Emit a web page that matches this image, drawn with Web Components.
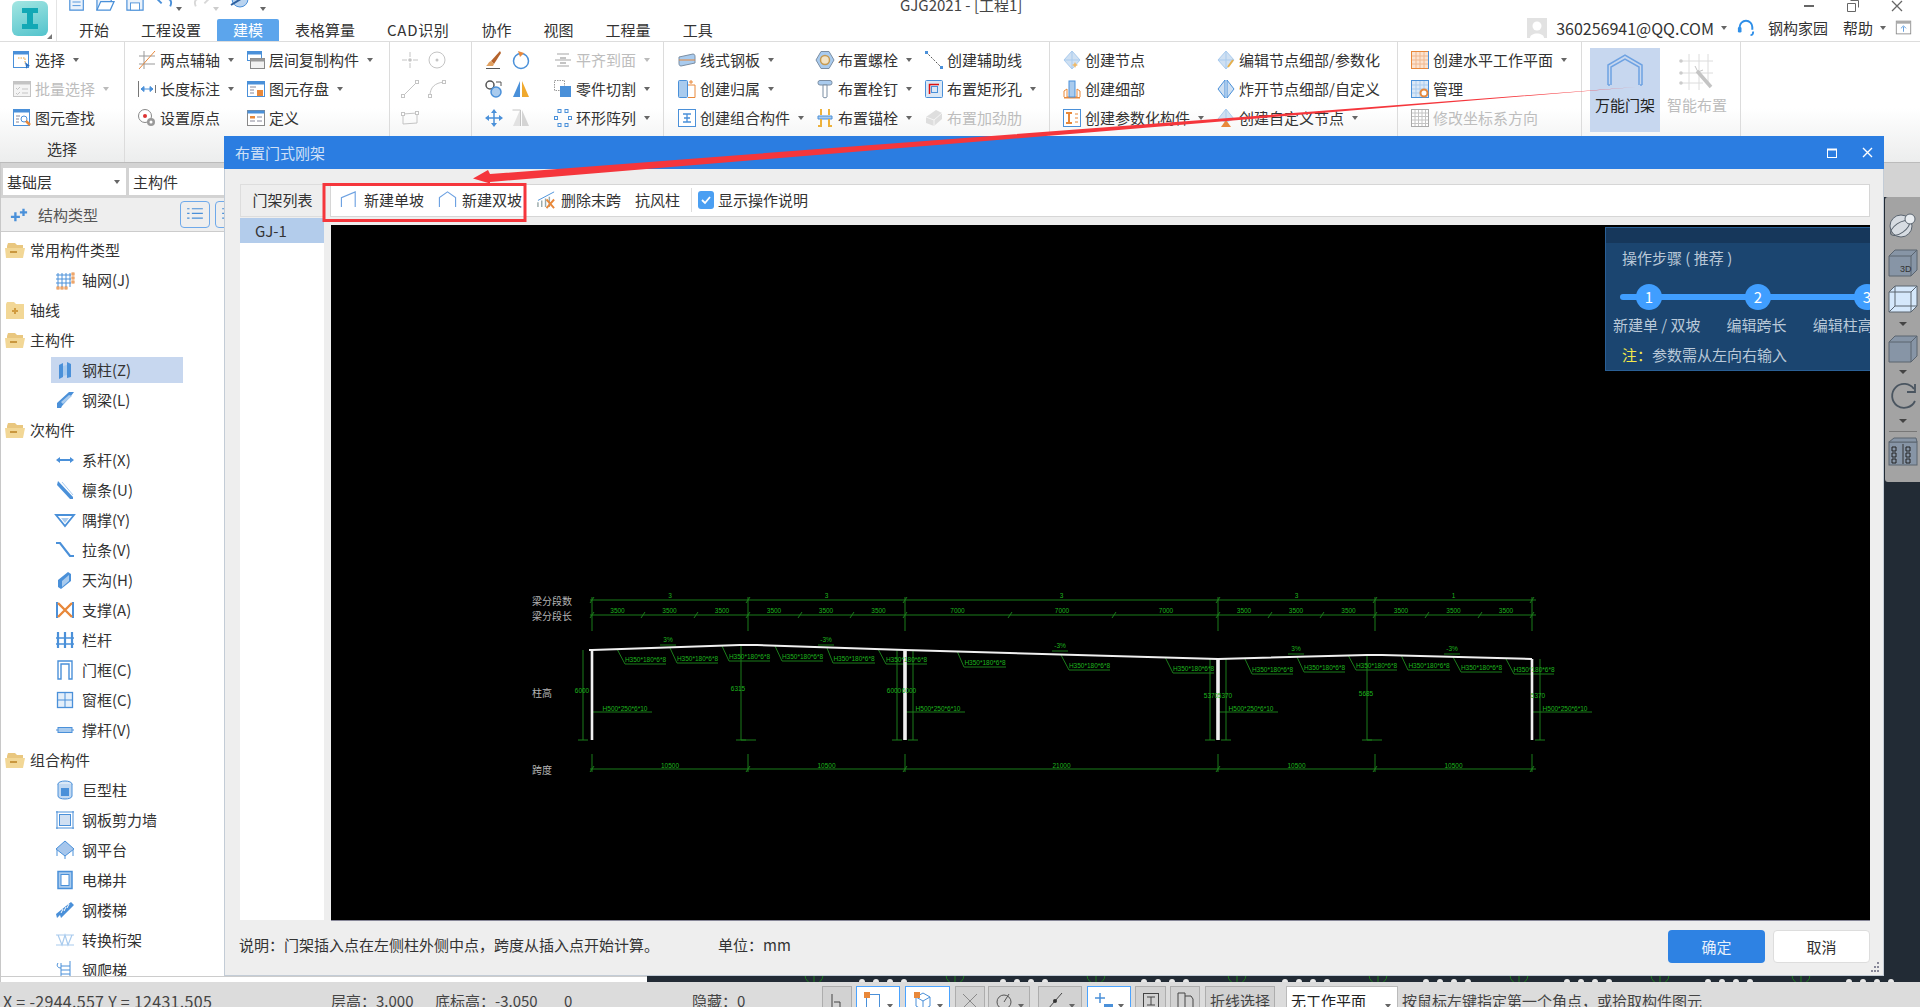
<!DOCTYPE html>
<html lang="zh">
<head>
<meta charset="utf-8">
<title>GJG2021</title>
<style>
    html, body { margin: 0; height: 100%; overflow: hidden; background: #fff; }
    body { font: 15px/20px "Noto Sans CJK SC", "Noto Sans", sans-serif; color: #333; }
</style>
</head>
<body>
<gjg-app></gjg-app>
<script>
/**
 * Icon drawings, 20x20 box unless the element says otherwise.
 * Rough copies of the GJG ribbon and tree icons.
 */
const B = '#4a90d9', L = '#a9cbee', O = '#e8883a', G = '#c4c4c4', D = '#5f6b7a';
const ICONS = {
    qDoc: `<path d="M2 0v19h15V6l-5-6z" fill="#eaf2fb" stroke="${B}" stroke-width="1.300"/><path d="M5 10h9M5 14h9" stroke="${B}"/>`,
    qOpen: `<path d="M1 18V4h7l2 2h6v3" fill="#eaf2fb" stroke="${B}" stroke-width="1.300"/><path d="M1 18l4-9h14l-4 9z" fill="#fff" stroke="${B}" stroke-width="1.300"/>`,
    qSave: `<path d="M1 0v19h18V0z" fill="#eaf2fb" stroke="${B}" stroke-width="1.300"/><rect x="5" y="11" width="10" height="8" fill="#fff" stroke="${B}"/>`,
    qUndo: `<path d="M2 6l5 5M2 6h10c5 0 6 4 4 8" fill="none" stroke="${B}" stroke-width="2"/>`,
    qRedo: `<path d="M18 6l-5 5M18 6H8c-5 0-6 4-4 8" fill="none" stroke="#d8d8d8" stroke-width="2"/>`,
    qGlobe: `<circle cx="10" cy="6" r="8" fill="#b9d3ef" stroke="${B}"/><path d="M1 12L19 1" stroke="#2d5f9e" stroke-width="2"/>`,
    select: `<rect x="1.500" y="1.500" width="15" height="16" fill="#fff" stroke="${B}"/><rect x="1.500" y="1.500" width="15" height="3" fill="${B}"/><path d="M6 8h7v6" fill="none" stroke="#e8a33a" stroke-dasharray="1.500 1"/><path d="M13 12l5 4-2.500 .5-1 2.500z" fill="#2b6fc0"/>`,
    batch: `<rect x="1.500" y="2.500" width="17" height="15" fill="#f4f4f4" stroke="${G}"/><rect x="1.500" y="2.500" width="17" height="3" fill="${G}"/><path d="M4 9l1.500 1.500L8 8M4 14l1.500 1.500L8 13M10 10h6M10 14h6" fill="none" stroke="${G}"/>`,
    find: `<rect x="1.500" y="1.500" width="16" height="16" fill="#fff" stroke="${B}"/><rect x="1.500" y="1.500" width="16" height="3" fill="${B}"/><path d="M4 8h4M4 11h3M4 14h3" stroke="#889"/><circle cx="12" cy="11" r="3" fill="#fff" stroke="${B}"/><path d="M14 13l4 4" stroke="${O}" stroke-width="2.500"/>`,
    axis2: `<path d="M2 6h16M2 14h16M7 1v18" stroke="#999" fill="none"/><path d="M2 19L18 1" stroke="${O}" fill="none"/>`,
    length: `<path d="M1.500 2v16M18.500 6v8" stroke="#777"/><path d="M4 10h12M4 10l3-2.500v5zM16 10l-3-2.500v5z" fill="${B}" stroke="${B}"/>`,
    origin: `<circle cx="8" cy="8" r="6.500" fill="#fff" stroke="#888"/><circle cx="8" cy="8" r="2" fill="#d33"/><circle cx="14" cy="14" r="4" fill="#999"/><circle cx="14" cy="14" r="1.500" fill="#fff"/>`,
    floorcopy: `<rect x="1.500" y="1.500" width="14" height="9" fill="#fff" stroke="${B}"/><rect x="1.500" y="1.500" width="14" height="3" fill="${B}"/><rect x="4.500" y="8.500" width="14" height="10" fill="#f2f2f2" stroke="#888"/><rect x="4.500" y="8.500" width="14" height="3" fill="#999"/>`,
    elsave: `<rect x="1.500" y="2.500" width="17" height="15" fill="#fff" stroke="${B}"/><rect x="1.500" y="2.500" width="17" height="3" fill="${B}"/><path d="M4 8h6M4 11h4M4 14h4" stroke="#889"/><rect x="11" y="11" width="6" height="6" fill="${O}"/>`,
    define: `<rect x="1.500" y="2.500" width="17" height="15" fill="#fff" stroke="#888"/><rect x="1.500" y="2.500" width="17" height="3" fill="${B}"/><rect x="4" y="8" width="5" height="2.500" fill="${O}"/><path d="M11 9h5M4 13h5M11 13h5" stroke="#889"/>`,
    point: `<path d="M10 2v5M10 13v5M2 10h5M13 10h5" stroke="${G}"/><circle cx="10" cy="10" r="1.800" fill="${G}"/>`,
    circlept: `<circle cx="10" cy="10" r="8" fill="none" stroke="${G}"/><circle cx="10" cy="10" r="1.500" fill="${G}"/>`,
    gline: `<path d="M3 17L17 3" stroke="${G}"/><rect x="1.500" y="15.500" width="3" height="3" fill="#fff" stroke="${G}"/><rect x="15.500" y="1.500" width="3" height="3" fill="#fff" stroke="${G}"/>`,
    garc: `<path d="M3 17C3 8 8 4 17 3" fill="none" stroke="${G}"/><rect x="1.500" y="15.500" width="3" height="3" fill="#fff" stroke="${G}"/><rect x="15.500" y="1.500" width="3" height="3" fill="#fff" stroke="${G}"/>`,
    grect: `<path d="M3 6l14-1v10l-14 1z" fill="none" stroke="${G}"/><rect x="1.500" y="4.500" width="3" height="3" fill="#fff" stroke="${G}"/><rect x="15.500" y="3.500" width="3" height="3" fill="#fff" stroke="${G}"/>`,
    brush: `<path d="M16 1L7 11l3 3 7-11z" fill="#b5632c"/><path d="M7 11c-3 1-3 4-5 5h7l1-2z" fill="#e0a060"/><path d="M2 18.500h14" stroke="#555"/>`,
    rotate: `<circle cx="10" cy="11" r="7.500" fill="none" stroke="${B}" stroke-width="1.500"/><path d="M7 1l6 2-4 4z" fill="${O}"/>`,
    offset: `<circle cx="6" cy="6" r="4" fill="#fff" stroke="#555" stroke-width="1.500"/><circle cx="12" cy="13" r="5" fill="${L}" stroke="${B}" stroke-width="1.500"/><path d="M12 3h5v4" fill="none" stroke="#555"/>`,
    mirror: `<path d="M9 2v16H2z" fill="${B}"/><path d="M11 2v16h7z" fill="#f0a92e"/>`,
    move: `<path d="M10 1l3 4h-6zM10 19l3-4h-6zM1 10l4-3v6zM19 10l-4-3v6z" fill="${B}"/><path d="M10 5v10M5 10h10" stroke="${B}" stroke-width="1.500"/>`,
    gmirror: `<path d="M9 2v16H2z" fill="#e2e2e2"/><path d="M11 2v16h7z" fill="#d4d4d4"/><path d="M1.500 2h8v16" fill="none" stroke="${G}"/>`,
    align: `<path d="M4 4h12M2 10h16M4 16h12" stroke="${G}" stroke-width="1.500"/><path d="M7 7h6v2H7zM7 12h6v2H7z" fill="${G}"/>`,
    cut: `<rect x="1.500" y="1.500" width="10" height="10" fill="none" stroke="#999" stroke-dasharray="1.500 1"/><rect x="7" y="7" width="11" height="11" fill="${B}"/>`,
    ring: `<g fill="none" stroke="${B}"><rect x="5" y="1.500" width="3" height="3"/><rect x="12" y="1.500" width="3" height="3"/><rect x="1.500" y="8.500" width="3" height="3"/><rect x="15.500" y="8.500" width="3" height="3"/><rect x="5" y="15.500" width="3" height="3"/><rect x="12" y="15.500" width="3" height="3"/></g>`,
    plate: `<path d="M2 7l14-3c2 0 2 2 2 3v6l-14 3c-2 0-2-2-2-3z" fill="${L}" stroke="#7b8ea3"/><path d="M2 10h16" stroke="${O}"/>`,
    belong: `<rect x="1.500" y="1.500" width="9" height="17" rx="1" fill="${L}" stroke="${B}"/><path d="M11 6h7v12.500h-7" fill="#fff" stroke="${O}"/><path d="M14 1v4M12 3h4" stroke="${O}"/>`,
    combo: `<rect x="1.500" y="1.500" width="17" height="17" fill="#fff" stroke="${B}"/><path d="M6 6h8M6 14h8M10 6v8M7 10h6" stroke="${B}" stroke-width="1.300"/>`,
    bolt: `<path d="M6 1.500h8l5 8.500-5 8.500H6L1 10z" fill="${L}" stroke="#7b8ea3"/><circle cx="10" cy="10" r="4.500" fill="#f3e3c4" stroke="#c59a52" stroke-width="1.500"/>`,
    stud: `<rect x="3" y="1.500" width="14" height="4.500" rx="2" fill="${L}" stroke="#7b8ea3"/><path d="M8 6h4v12c0 1-4 1-4 0z" fill="#fff" stroke="#7b8ea3"/>`,
    anchor: `<path d="M3 8h14v3H3z" fill="${L}" stroke="${B}"/><path d="M6 1v6M14 1v6M6 11v7h-3M14 11v7h3" fill="none" stroke="#edb23c" stroke-width="2"/>`,
    guide: `<path d="M2 2l16 16" stroke="#555" stroke-dasharray="2 1.500"/><rect x="1" y="1" width="3" height="3" fill="${B}"/><rect x="16" y="16" width="3" height="3" fill="${B}"/>`,
    hole: `<rect x="1.500" y="1.500" width="17" height="17" rx="1" fill="#dbe8f6" stroke="${B}"/><path d="M5.500 15V5.500H15" fill="none" stroke="#d11" stroke-width="1.500"/><rect x="7.500" y="7.500" width="6" height="6" fill="none" stroke="${B}"/>`,
    rib: `<path d="M2 9l10-7 6 3v6l-8 7-8-3z" fill="#dedede"/><path d="M2 9l8 3v6M10 12l8-7" fill="none" stroke="#f5f5f5"/>`,
    node: `<path d="M10 1l8 9-8 9-8-9z" fill="#cfe0f2" stroke="${L}"/><path d="M10 1v18M2 10h16" stroke="${L}"/><path d="M13 12l1 2 2 1-2 1-1 2-1-2-2-1 2-1z" fill="#eeb96a"/>`,
    detail: `<path d="M2 18.500h16" stroke="${O}" stroke-width="2"/><path d="M2 18V12l3-2v8M15 18v-8l3 2v6" fill="#fff" stroke="${O}"/><rect x="7" y="2" width="6" height="16" fill="${L}" stroke="${B}"/>`,
    param: `<rect x="1.500" y="1.500" width="17" height="17" fill="#fff" stroke="${B}"/><path d="M4 5h6M4 15h6M7 5v10" stroke="${O}" stroke-width="2"/><path d="M13 6h3M13 10h3M13 14h3" stroke="${O}"/>`,
    editnode: `<path d="M10 1l8 9-8 9-8-9z" fill="#cfe0f2" stroke="${L}"/><path d="M10 1v18M2 10h16" stroke="${L}"/><path d="M17 10l-5 7" stroke="#e8b04a" stroke-width="2"/>`,
    explode: `<path d="M9 1v18L2 10zM11 1v18l7-9z" fill="#cfe0f2" stroke="${B}"/>`,
    customnode: `<path d="M10 1l8 10-8 3-8-3z" fill="#cfe0f2" stroke="${L}"/><path d="M10 1v13" stroke="${L}"/><path d="M10 12l5 7H5z" fill="${O}"/>`,
    plane: `<rect x="1.500" y="1.500" width="17" height="17" fill="#fbe3d0" stroke="${O}"/><path d="M6 2v16M10 2v16M14 2v16M2 6h16M2 10h16M2 14h16" stroke="#f0b78e"/><path d="M18.500 1v18" stroke="${B}"/>`,
    manage: `<rect x="1.500" y="1.500" width="17" height="17" fill="#dbe8f6" stroke="${B}"/><path d="M6 2v16M10 2v16M14 2v16M2 6h16M2 10h16M2 14h16" stroke="${L}"/><circle cx="14" cy="14" r="3.500" fill="#fff" stroke="${O}" stroke-width="2"/>`,
    coord: `<rect x="1.500" y="1.500" width="17" height="17" fill="#fff" stroke="#aaa"/><path d="M5 2v16M8.500 2v16M12 2v16M15.500 2v16M2 5h16M2 8.500h16M2 12h16M2 15.500h16" stroke="${G}"/>`,
    portal: `<path d="M3 32V12L20 2l17 10v20M3 32h2M35 32h2" fill="none" stroke="#6ea2e2" stroke-width="1.500"/><path d="M6 32V14L20 6l14 8v18" fill="none" stroke="#6ea2e2" stroke-width="1.500"/>`,
    smart: `<path d="M4 8h32M4 20h32M4 30h22M12 1v36M22 1v36M31 1v28" stroke="#dcdcdc" fill="none"/><circle cx="4" cy="8" r="1.800" fill="#ccc"/><circle cx="4" cy="20" r="1.800" fill="#ccc"/><circle cx="4" cy="30" r="1.800" fill="#ccc"/><path d="M20 18l14 16" stroke="#c4c4c4" stroke-width="3.500"/><path d="M18 13l3 6 5-2" stroke="#c4c4c4" fill="none"/>`,
    fopen: `<path d="M2 6l1-3h7l2 2h6v3H2z" fill="#e9c77f"/><path d="M0 8h20l-2 10H1z" fill="#f2d796"/><rect x="5" y="11" width="7" height="2" fill="#c9973f"/>`,
    fclosed: `<path d="M1 4l1-2h7l2 2h8v15H1z" fill="#f2d796"/><path d="M10 8v6M7 11h6" stroke="#d19b3f" stroke-width="2"/>`,
    grid: `<path d="M3 3v14M7 3v14M11 3v14M15 3v14M1 5h15M1 9h15M1 13h15" stroke="${B}"/><g fill="#fff" stroke="${O}"><rect x="17" y="3" width="2" height="2"/><rect x="17" y="7" width="2" height="2"/><rect x="17" y="11" width="2" height="2"/><rect x="2" y="17" width="2" height="2"/><rect x="6" y="17" width="2" height="2"/><rect x="10" y="17" width="2" height="2"/></g>`,
    column: `<path d="M4 5l4-2v14l-4 2zM12 2l4 2v13l-4 1z" fill="${B}"/><path d="M8 6l4-1v10l-4 1z" fill="${L}"/>`,
    beam: `<path d="M2 13l12-11h5l-3 4L7 16l-1 2H2z" fill="${B}"/><path d="M6 12l8-7 3 1-9 8z" fill="${L}"/>`,
    tie: `<path d="M1 10l4-3v2h10V7l4 3-4 3v-2H5v2z" fill="${B}"/>`,
    purlin: `<path d="M3 1l15 16v2h-3L2 5z" fill="${B}"/><path d="M7 2l11 13" stroke="${L}"/>`,
    sbrace: `<path d="M1 5h18l-9 11z" fill="none" stroke="${B}" stroke-width="1.800"/><path d="M6 8h8l-4 5z" fill="${L}"/>`,
    rod: `<path d="M1 3h4l10 13h4" fill="none" stroke="${B}" stroke-width="2.200"/>`,
    gutter: `<path d="M3 10l10-8 3 2v7L6 19l-3-2z" fill="${B}"/><path d="M7 11l7-6v6l-7 6z" fill="${L}"/>`,
    cross: `<path d="M2 2v16M18 2v16" stroke="${B}" stroke-width="2"/><path d="M3 3l14 14M17 3L3 17" stroke="${O}" stroke-width="2.400"/>`,
    rail: `<path d="M3 2v16M10 2v16M17 2v16" stroke="${B}" stroke-width="2.200"/><path d="M1 8h18M1 14h18" stroke="${B}" stroke-width="1.500"/>`,
    door: `<path d="M3 19V1h14v18h-3V4H6v15z" fill="none" stroke="${B}" stroke-width="1.400"/>`,
    win: `<rect x="2.500" y="2.500" width="15" height="15" fill="#e4effa" stroke="${B}" stroke-width="1.300"/><path d="M10 3v14M3 10h14" stroke="${B}"/>`,
    strut: `<path d="M1 10h18" stroke="${B}"/><rect x="3" y="7.500" width="14" height="5" fill="${L}" stroke="${B}"/>`,
    mega: `<ellipse cx="10" cy="4" rx="7" ry="3" fill="#dbe8f6" stroke="${B}"/><path d="M3 4v12c0 4 14 4 14 0V4" fill="#c0d8f2" stroke="${B}"/><path d="M6 8h8v8H6z" fill="${B}"/>`,
    wall: `<path d="M2 1v18M18 1v18M1 2h18M1 18h18" stroke="${B}"/><rect x="4.500" y="4.500" width="11" height="11" fill="#cfdff2" stroke="${B}"/>`,
    platform: `<path d="M10 1l9 8-9 7-9-7z" fill="#a6c6ec" stroke="${B}"/><path d="M2 10v6M18 10v6M10 16v3" stroke="${B}"/>`,
    lift: `<rect x="3" y="1.500" width="14" height="17" fill="${L}" stroke="${B}" stroke-width="1.500"/><rect x="6" y="4.500" width="8" height="11" fill="#fff" stroke="${B}"/>`,
    stair: `<path d="M1 14L16 2l3 3L6 18l-1-3-3 3z" fill="${B}"/><path d="M6 13l2-4M9 11l2-4M12 8l2-4" stroke="#fff"/>`,
    truss: `<path d="M1 5h18M1 15h18M3 5l4 10 3-10 3 10 4-10" fill="none" stroke="${L}" stroke-width="1.200"/>`,
    ladder: `<path d="M6 3v16M15 1v18M6 6h9M6 10h9M6 14h9" stroke="${B}" fill="none"/><path d="M3 3c-2 3 0 5 3 5" stroke="${B}" fill="none"/>`,
    sparkle: `<path d="M6 7v10M1 12h10M15 3v8M11 7h8" stroke="${B}" stroke-width="2.600"/>`,
    slope1: `<path d="M1.500 18V8L16 2v16" fill="none" stroke="#6ea2e2" stroke-width="1.200"/>`,
    slope2: `<path d="M1.500 18V8L10 2l8.500 6v10" fill="none" stroke="#6ea2e2" stroke-width="1.200"/>`,
    delspan: `<path d="M1 18v-5M5 18v-7M9 18V9M13 18V7" stroke="#9aa" stroke-width="1.500"/><path d="M1 11L18 2" stroke="${B}"/><path d="M10 10l8 9M18 10l-8 9" stroke="${O}" stroke-width="2"/>`,
    sphere: `<circle cx="13" cy="15" r="11" fill="#d7dce2" stroke="#5a646f"/><ellipse cx="12" cy="17" rx="11" ry="5" transform="rotate(-35 12 17)" fill="none" stroke="#5a646f"/><circle cx="22" cy="8" r="5" fill="#e9edf1" stroke="#5a646f"/>`,
    cube3d: `<path d="M1 8l6-6h22v20l-6 6H1z" fill="#8795a6" stroke="#5a646f"/><path d="M1 8h22v20M23 8l6-6" fill="none" stroke="#5a646f"/>`,
    cubewire: `<path d="M1 8l6-6h22v20l-6 6H1z" fill="#d5e8fb" stroke="#5a646f"/><path d="M1 8h22v20M23 8l6-6M7 2v20H29M7 22l-6 6" fill="none" stroke="#5a646f"/>`,
    cubesolid: `<path d="M1 8l6-6h22v20l-6 6H1z" fill="#8795a6" stroke="#5a646f"/><path d="M1 8h22v20M23 8l6-6" fill="none" stroke="#5a646f"/>`,
    rotatecw: `<path d="M26 7A12 12 0 1 0 27 19" fill="none" stroke="#4a5560" stroke-width="1.800"/><path d="M27 2v8h-8" fill="none" stroke="#4a5560" stroke-width="1.800"/>`,
    checks: `<rect x="1" y="5" width="28" height="23" fill="#8795a6" stroke="#5a646f"/><path d="M6 1h22l1 4H1z" fill="#8795a6" stroke="#5a646f"/><path d="M15 7v20" stroke="#333"/><path d="M4 10h4v4H4zM4 16h4v4H4zM4 22h4v4H4zM18 10h4v4h-4zM18 16h4v4h-4zM18 22h4v4h-4z" fill="none" stroke="#222"/>`,
    sbL: `<path d="M5 3v14h8v-6H7" fill="none" stroke="#444"/>`,
    sbPin: `<rect x="3.500" y="3.500" width="13" height="15" fill="#fff" stroke="${B}"/><rect x="1" y="1" width="6" height="6" fill="${O}"/>`,
    sbCube: `<path d="M10 2l7 4v9l-7 4-7-4V6z" fill="#fff" stroke="${B}"/><path d="M3 6l7 4 7-4M10 10v9" fill="none" stroke="${B}"/><rect x="1" y="1" width="6" height="6" fill="${O}"/>`,
    sbX: `<path d="M3 3l14 14M17 3L3 17" stroke="#888"/>`,
    sbRot: `<circle cx="10" cy="11" r="7" fill="none" stroke="#555"/><path d="M10 11l5-8" stroke="#555"/>`,
    sbLine: `<path d="M3 18L17 2" stroke="#444"/><circle cx="10" cy="10" r="2" fill="#333"/>`,
    sbPlus: `<path d="M6 2v10M1 7h10" stroke="${B}" stroke-width="1.500"/><rect x="10" y="13" width="9" height="6" fill="${B}"/>`,
    sbI: `<rect x="2.500" y="2.500" width="15" height="15" fill="none" stroke="#444"/><path d="M6 6h8M6 14h8M10 6v8" stroke="#444"/>`,
    sbDoor: `<path d="M3 19V2h7v17M10 5h6l2 3v11" fill="none" stroke="#444"/>`,
    avatar: `<rect width="20" height="20" fill="#e2e2e2"/><circle cx="10" cy="8" r="4.500" fill="#fff"/><path d="M3 20c0-6 14-6 14 0z" fill="#fff"/>`,
    headset: `<path d="M3 12V9a7 7 0 0 1 14 0v3" fill="none" stroke="#2f8fe8" stroke-width="2.200"/><rect x="1" y="9" width="4" height="6" rx="1.500" fill="#2f8fe8"/><path d="M15 18c2 0 3-1 3-4" fill="none" stroke="#2f8fe8" stroke-width="2"/>`,
    upload: `<rect x="1.500" y="2.500" width="17" height="15" fill="#fff" stroke="#888"/><rect x="1.500" y="2.500" width="17" height="3" fill="#aaa"/><path d="M10 15V9M7 11l3-3 3 3" fill="none" stroke="${B}"/>`,
    listbtn: `<path d="M4 6h3M4 12h3M4 18h3M10 6h14M10 12h14M10 18h14" stroke="${B}" stroke-width="1.500"/>`
};

/**
 * <gjg-icon name size box> one inline SVG out of the table above.
 * box is the drawing's own coordinate size, 20 by default.
 */
class GjgIcon extends HTMLElement {
    connectedCallback() {
        const size = this.getAttribute('size') || 20;
        const box = this.getAttribute('box') || 20;
        const root = this.attachShadow({ mode: 'open' });
        root.innerHTML = `
            <style>
                :host { display: inline-flex; flex: none; width: ${size}px; height: ${size}px; }
                svg { display: block; overflow: visible; }
            </style>
            <svg width="${size}" height="${size}" viewBox="0 0 ${box} ${box}">${ICONS[this.getAttribute('name')] || ''}</svg>`;
    }
}

/**
 * <gjg-rb-item icon caret disabled> small ribbon command with icon and label.
 */
class GjgRibbonItem extends HTMLElement {
    connectedCallback() {
        const caret = this.hasAttribute('caret') ? '<i></i>' : '';
        const icon = this.getAttribute('icon');
        const root = this.attachShadow({ mode: 'open' });
        root.innerHTML = `
            <style>
                :host { display: flex; align-items: center; height: 29px; white-space: nowrap; color: #333; }
                :host([disabled]) { color: #bdbdbd; }
                gjg-icon { margin-right: 3px; }
                i { width: 0; height: 0; margin-left: 8px; border: 3.5px solid transparent; border-top: 4px solid #666; border-bottom: 0; }
                :host([disabled]) i { border-top-color: #bbb; }
            </style>
            ${icon ? `<gjg-icon name="${icon}"></gjg-icon>` : ''}<slot></slot>${caret}`;
    }
}

/**
 * <gjg-rb-big icon> large ribbon button with the label under the icon.
 */
class GjgRibbonBig extends HTMLElement {
    connectedCallback() {
        const root = this.attachShadow({ mode: 'open' });
        root.innerHTML = `
            <style>
                :host { display: flex; flex-direction: column; align-items: center; width: 70px; height: 84px; padding-top: 5px; box-sizing: border-box; }
                :host([active]) { background: #c7d7ef; color: #222; }
                :host([disabled]) { color: #bdbdbd; }
                slot { display: block; margin-top: 2px; }
            </style>
            <gjg-icon name="${this.getAttribute('icon')}" size="40" box="40"></gjg-icon><slot></slot>`;
    }
}

/**
 * <gjg-tree-row icon child active> one row of the component tree.
 */
class GjgTreeRow extends HTMLElement {
    connectedCallback() {
        const root = this.attachShadow({ mode: 'open' });
        root.innerHTML = `
            <style>
                :host { display: flex; align-items: center; height: 30px; padding-left: 4px; white-space: nowrap; }
                :host([child]) { padding-left: 50px; }
                .row { display: flex; align-items: center; gap: 5px; height: 26px; }
                :host([child]) .row { gap: 7px; padding-left: 4px; width: 128px; }
                :host([active]) .row { background: #c7d7ef; }
            </style>
            <div class="row"><gjg-icon name="${this.getAttribute('icon')}"></gjg-icon><span><slot></slot></span></div>`;
    }
}

/**
 * <gjg-tool icon> toolbar button in the dialog.
 */
class GjgTool extends HTMLElement {
    connectedCallback() {
        const icon = this.getAttribute('icon');
        const root = this.attachShadow({ mode: 'open' });
        root.innerHTML = `
            <style>
                :host { display: flex; align-items: center; gap: 5px; white-space: nowrap; height: 29px; }
            </style>
            ${icon ? `<gjg-icon name="${icon}" size="19"></gjg-icon>` : ''}<slot></slot>`;
    }
}

/**
 * <gjg-dialog heading> the floating window, content goes in the slot.
 */
class GjgDialog extends HTMLElement {
    connectedCallback() {
        const root = this.attachShadow({ mode: 'open' });
        root.innerHTML = `
            <style>
                :host { position: absolute; left: 224px; top: 136px; width: 1660px; height: 840px; box-sizing: border-box; display: flex; flex-direction: column; background: #eee; border: 1px solid #c3ccd6; border-top: 0; }
                header { flex: none; display: flex; align-items: center; height: 33px; margin: 0 -1px; padding-left: 11px; background: #2b7de1; color: #cfe0f6; }
                header span { flex: 1; }
                header svg { display: block; margin-right: 11px; }
                header svg + svg { margin: 0 11px 0 14px; }
                .body { flex: 1; min-height: 0; padding: 15px 13px 0 15px; }
                .grip { position: absolute; right: 3px; bottom: 3px; }
            </style>
            <header><span>${this.getAttribute('heading')}</span>
                <svg width="10" height="10"><rect x=".5" y="1.500" width="9" height="8" fill="none" stroke="#fff"/><path d="M0 1.500h10" stroke="#fff" stroke-width="2"/></svg>
                <svg width="11" height="11"><path d="M1 1l9 9M10 1l-9 9" stroke="#fff" stroke-width="1.400"/></svg>
            </header>
            <div class="body"><slot></slot></div>
            <svg class="grip" width="10" height="10" fill="#889"><rect x="7" y="0" width="2" height="2"/><rect x="4" y="4" width="2" height="2"/><rect x="7" y="4" width="2" height="2"/><rect x="1" y="8" width="2" height="2"/><rect x="4" y="8" width="2" height="2"/><rect x="7" y="8" width="2" height="2"/></svg>`;
    }
}

/**
 * <gjg-frame-canvas> black canvas with the portal frame elevation.
 * Numbers are page coordinates, the viewBox shifts them into the canvas.
 */
class GjgFrameCanvas extends HTMLElement {
    connectedCallback() {
        const root = this.attachShadow({ mode: 'open' });
        const line = (x1, y1, x2, y2) => `<path d="M${x1} ${y1}L${x2} ${y2}"/>`;
        const num = (x, y, s) => `<text class="num" x="${x}" y="${y}">${s}</text>`;
        const label = (x, y, s) => `<text class="lab" x="${x}" y="${y}">${s}</text>`;
        const tick = (x, y) => `<path d="M${x - 2} ${y + 3}L${x + 2} ${y - 3}"/>`;

        const spans = [592, 748, 905, 1218, 1375, 1532];
        const ticks = [592, 643, 696, 748, 800, 852, 905, 1010, 1114, 1218, 1270, 1322, 1375, 1427, 1480, 1532];
        let lines = '';
        let texts = '';

        // dimension rows on top and at the bottom
        lines += line(590, 600, 1536, 600) + line(590, 615, 1536, 615) + line(590, 769, 1536, 769);
        spans.forEach(x => {
            lines += line(x, 597, x, 631) + line(x, 754, x, 772) + tick(x, 600) + tick(x, 769);
        });
        ticks.forEach(x => { lines += tick(x, 615); });
        for (let i = 0; i < ticks.length - 1; i++) {
            const long = ticks[i + 1] - ticks[i] > 90;
            texts += num((ticks[i] + ticks[i + 1]) / 2, 613, long ? '7000' : '3500');
        }
        for (let i = 0; i < spans.length - 1; i++) {
            const mid = (spans[i] + spans[i + 1]) / 2;
            texts += num(mid, 598, i === 4 ? '1' : '3');
            texts += num(mid, 768, i === 2 ? '21000' : '10500');
        }

        // height dimensions
        [[583, 650], [741, 645], [897, 650], [913, 650], [1210, 659], [1226, 659], [1367, 655], [1540, 659]].forEach(([x, top]) => {
            lines += line(x, top, x, 740) + line(x - 5, 740, x + 5, 740);
        });
        lines += line(741, 740, 756, 740) + line(1367, 740, 1382, 740);
        texts += num(582, 693, '6000') + num(738, 691, '6315') + num(894, 693, '6000') + num(909, 693, '6000');
        texts += num(1211, 698, '5370') + num(1225, 698, '5370') + num(1366, 696, '5685') + num(1538, 698, '5370');

        // section callouts on the rafters
        [[617, 649, 625, 664, 666], [670, 648, 677, 663, 718], [722, 646, 729, 661, 770], [775, 646, 782, 661, 823],
            [827, 648, 833, 663, 875], [878, 649, 886, 664, 927], [957, 651, 964, 667, 1006], [1061, 655, 1069, 670, 1110],
            [1165, 657, 1173, 673, 1214], [1245, 659, 1252, 674, 1293], [1297, 657, 1304, 672, 1345], [1348, 655, 1356, 670, 1397],
            [1401, 655, 1408, 670, 1450], [1453, 657, 1461, 672, 1502], [1506, 659, 1514, 674, 1554]].forEach(([x1, y1, x2, y2, x3]) => {
            lines += `<path d="M${x1} ${y1}L${x2} ${y2}H${x3}"/>`;
            texts += num((x2 + x3) / 2, y2 - 2, 'H350*180*6*8');
        });

        // section callouts on the columns
        [592, 905, 1218, 1532].forEach(x => {
            lines += line(x, 712, x + 60, 712);
            texts += num(x + 33, 711, 'H500*250*6*10');
        });

        // slope marks
        [[668, 645, '3%'], [826, 645, '-3%'], [1060, 651, '-3%'], [1296, 654, '3%'], [1452, 654, '-3%']].forEach(([x, y, s]) => {
            lines += line(x - 8, y, x + 8, y);
            texts += num(x, y - 3, s);
        });

        root.innerHTML = `
            <style>
                :host { display: block; position: relative; height: 695px; background: #000; overflow: hidden; }
                svg { display: block; }
                .dim { fill: none; stroke: #1b7d1b; stroke-width: 1; }
                .frame { fill: none; stroke: #f0f0f0; }
                .num { font: 6.500px "Liberation Sans", sans-serif; fill: #1db41d; text-anchor: middle; }
                .lab { font: 10px "Noto Sans CJK SC", sans-serif; fill: #b5b5b5; }
            </style>
            <svg width="1539" height="695" viewBox="331 225 1539 695">
                <g class="dim">${lines}</g>
                <path class="frame" stroke-width="2" d="M589 650L592 650L740 645L757 645L905 650L1218 659L1367 655L1382 655L1532 659"/>
                <path class="frame" stroke-width="2.600" d="M592 650V740M1532 659V740"/>
                <path class="frame" stroke-width="3.600" d="M905 650V740M1218 659V740"/>
                ${texts}
                ${label(532, 605, '梁分段数')}${label(532, 620, '梁分段长')}${label(532, 697, '柱高')}${label(532, 774, '跨度')}
            </svg>
            <slot></slot>`;
    }
}

/**
 * <gjg-steps> the floating "how to use" panel over the canvas.
 */
class GjgSteps extends HTMLElement {
    connectedCallback() {
        const root = this.attachShadow({ mode: 'open' });
        root.innerHTML = `
            <style>
                :host { position: absolute; top: 2px; right: 0; width: 265px; height: 144px; box-sizing: border-box; overflow: hidden; background: #1b4570; border: 1px solid #2a5f95; border-right: 0; color: #b9c8d8; white-space: nowrap; }
                .strip { height: 15px; background: #16375b; }
                .title { height: 31px; padding-left: 16px; line-height: 30px; }
                .rail { position: relative; display: flex; gap: 83px; height: 26px; margin-top: 10px; padding-left: 30px; }
                .line { position: absolute; left: 14px; right: 0; top: 10px; height: 6px; border-radius: 3px 0 0 3px; background: #409eff; }
                .dot { position: relative; flex: none; width: 26px; height: 26px; border-radius: 50%; background: #409eff; color: #fff; text-align: center; line-height: 26px; }
                .names { display: flex; gap: 26px; margin-top: 3px; padding-left: 7px; height: 24px; line-height: 24px; }
                .note { margin-top: 8px; padding-left: 16px; line-height: 20px; }
                .note b { font-weight: 400; color: #f3e84a; }
            </style>
            <div class="strip"></div>
            <div class="title">操作步骤 ( 推荐 )</div>
            <div class="rail"><div class="line"></div><div class="dot">1</div><div class="dot">2</div><div class="dot">3</div></div>
            <div class="names"><span>新建单 / 双坡</span><span>编辑跨长</span><span>编辑柱高</span></div>
            <div class="note"><b>注：</b>参数需从左向右输入</div>`;
    }
}

/**
 * <gjg-workspace> what shows of the dark modelling view behind the dialog.
 */
class GjgWorkspace extends HTMLElement {
    connectedCallback() {
        const root = this.attachShadow({ mode: 'open' });
        let marks = '';
        for (let x = 26; x < 1273; x += 141) {
            marks += `<path d="M${x + 132} 0a9 9 0 0 0 18 0M${x + 141} 0v8" fill="none" stroke="#1c7a1c"/>`;
            for (let i = 0; i < 4; i++) marks += `<circle cx="${x + 189 + i * 14}" cy="7" r="3" fill="#e8e8e8"/>`;
        }
        root.innerHTML = `
            <style>
                :host { display: flex; flex-direction: column; flex: 1; min-width: 0; background: #222b35; }
                .band { height: 34px; background: #d3d3d3; }
                .side { display: flex; flex-direction: column; align-items: center; align-self: flex-end; width: 35px; height: 285px; padding-top: 14px; box-sizing: border-box; background: #a3a3a3; border-radius: 3px 0 0 3px; }
                .side i { flex: none; width: 0; height: 0; border: 4px solid transparent; border-top: 4px solid #444; border-bottom: 0; }
                .side hr { flex: none; width: 28px; margin: 8px 0 5px; border: 0; border-top: 1px solid #777; }
                .tag { position: relative; height: 0; width: 30px; font: 9px/10px "Liberation Sans", sans-serif; color: #333; text-align: right; top: -14px; right: 6px; }
                svg.strip { display: block; margin-top: auto; }
            </style>
            <div class="band"></div>
            <div class="side">
                <gjg-icon name="sphere" size="30" box="30"></gjg-icon>
                <gjg-icon name="cube3d" size="30" box="30" style="margin-top:7px"></gjg-icon><div class="tag">3D</div>
                <gjg-icon name="cubewire" size="30" box="30" style="margin-top:6px"></gjg-icon><i style="margin:8px 0"></i>
                <gjg-icon name="cubesolid" size="30" box="30"></gjg-icon><i style="margin:6px 0 8px"></i>
                <gjg-icon name="rotatecw" size="30" box="30"></gjg-icon><i style="margin-top:7px"></i><hr>
                <gjg-icon name="checks" size="30" box="30"></gjg-icon>
            </div>
            <svg class="strip" width="1273" height="7">${marks}</svg>`;
    }
}

/**
 * <gjg-app> the whole window: title bar, ribbon, panels, status bar, dialog.
 */
class GjgApp extends HTMLElement {
    connectedCallback() {
        const root = this.attachShadow({ mode: 'open' });
        root.innerHTML = `
            <style>
                :host { display: flex; flex-direction: column; position: relative; width: 1920px; height: 1007px; overflow: hidden; }

                /* title bar */
                .top { flex: none; display: flex; height: 42px; border-bottom: 1px solid #ddd; box-sizing: border-box; }
                .logo { flex: none; position: relative; width: 57px; border-right: 1px solid #e4e4e4; box-sizing: border-box; padding: 1px 0 0 12px; }
                .logo b { display: flex; width: 36px; height: 35px; border-radius: 6px; background: linear-gradient(160deg, #a4e6e2, #52c3cc); }
                .logo u { position: absolute; left: 47px; top: 34px; width: 0; height: 0; border-left: 5px solid transparent; border-bottom: 5px solid #777; }
                .top-main { flex: 1; min-width: 0; }
                .row1 { display: flex; height: 14px; overflow: hidden; }
                .quick { display: flex; align-items: flex-start; width: 843px; padding-left: 11px; box-sizing: border-box; margin-top: -7px; }
                .title { line-height: 14px; margin-top: -2px; color: #444; white-space: nowrap; }
                .winbtns { display: flex; gap: 32px; margin-left: auto; padding: 0 17px 0 0; }
                .winbtns svg { display: block; }
                .row2 { display: flex; align-items: flex-end; height: 27px; padding-left: 6px; }
                .tab { height: 22px; line-height: 22px; padding: 0 16px; white-space: nowrap; }
                .tab.on { background: #5ca5ec; color: #fff; border-radius: 2px 2px 0 0; }
                .acct { display: flex; align-items: center; margin-left: auto; height: 27px; white-space: nowrap; padding-right: 8px; }
                .caret { width: 0; height: 0; border: 3.5px solid transparent; border-top: 4px solid #666; border-bottom: 0; }

                /* ribbon */
                .ribbon { flex: none; display: flex; height: 121px; background: linear-gradient(#fff 55%, #eceded); border-bottom: 1px solid #bbb; box-sizing: border-box; }
                .group { flex: none; display: flex; box-sizing: border-box; padding: 3px 0 0 12px; border-right: 1px solid #dcdcdc; position: relative; }
                .col { display: flex; flex-direction: column; }
                .pair { display: flex; align-items: center; gap: 7px; height: 29px; }
                .group-label { position: absolute; left: 0; right: 0; bottom: 3px; text-align: center; }

                /* panels */
                .main { flex: 1; min-height: 0; display: flex; }
                .left { flex: none; display: flex; flex-direction: column; width: 647px; box-sizing: border-box; border-left: 1px solid #c8c8c8; background: #fff; }
                .combos { flex: none; display: flex; gap: 3px; height: 35px; padding: 5px 0 3px 2px; box-sizing: border-box; background: #d3d3d3; }
                .combo { display: flex; align-items: center; justify-content: space-between; height: 27px; padding: 0 6px 0 4px; background: #fff; box-sizing: border-box; }
                .tree-head { flex: none; display: flex; align-items: center; height: 34px; padding-left: 9px; background: #eee; border-bottom: 1px solid #ccc; box-sizing: border-box; color: #555; }
                .tree-head .sq { display: flex; align-items: center; justify-content: center; width: 30px; height: 27px; margin-right: 5px; border: 1px solid #6ea9ea; border-radius: 4px; box-sizing: border-box; }
                .tree { flex: 1; min-height: 0; padding-top: 3px; }
                .tree-foot { flex: none; height: 5px; border-top: 1px solid #ccc; background: #fff; }

                /* dialog content */
                .dlg-grid { display: grid; grid-template-columns: 84px 1539px; column-gap: 7px; grid-template-rows: 33px 703px; }
                .tab-list { display: flex; align-items: center; justify-content: center; padding-bottom: 2px; border: 1px solid #ddd; border-right: 0; box-sizing: border-box; color: #333; }
                .tools { display: flex; align-items: center; gap: 14px; padding: 0 0 2px 9px; background: #fff; border: 1px solid #d6d6d6; box-sizing: border-box; white-space: nowrap; margin-left: -1px; }
                .tools .sep { width: 1px; height: 24px; background: #ddd; margin: 0 -7px 0 -3px; }
                .check { display: flex; align-items: center; gap: 4px; margin-left: -1px; }
                .check b { display: flex; align-items: center; justify-content: center; width: 16px; height: 18px; border-radius: 3px; background: #4b9ff2; }
                .list { margin-top: 1px; background: #fff; }
                .list div { height: 25px; line-height: 25px; padding-left: 15px; background: #b3cceb; }
                gjg-frame-canvas { margin-top: 8px; border-bottom: 1px solid #889; }
                .foot { display: flex; align-items: center; height: 55px; white-space: nowrap; }
                .foot .note { flex: 1; margin: -6px 0 0 -1px; }
                .foot .unit { margin-left: 59px; }
                .btn { width: 97px; height: 33px; line-height: 33px; text-align: center; border-radius: 4px; box-sizing: border-box; margin-left: 8px; margin-top: -3px; }
                .btn.ok { background: #2e82e3; color: #e6f0fb; }
                .btn.no { background: #fff; border: 1px solid #ddd; line-height: 31px; }

                /* status bar */
                .status { flex: none; display: flex; align-items: flex-start; height: 25px; overflow: hidden; padding-top: 4px; box-sizing: border-box; background: #dcdcdc; white-space: nowrap; }
                .status span { line-height: 30px; flex: none; color: #444; }
                .sb { flex: none; display: flex; align-items: center; justify-content: center; gap: 4px; height: 30px; box-sizing: border-box; border: 1px solid #adadad; background: #d2d2d2; }
                .sb.on { border-color: #4aa3ff; background: #fff; }
                .sb .caret { margin-top: 10px; }

                /* red annotation over everything */
                .marks { position: absolute; left: 0; top: 0; pointer-events: none; }
            </style>

            <div class="top">
                <div class="logo"><b><svg width="36" height="35"><path d="M10 7h16v5h-5v11h5v5H10v-5h5V12h-5z" fill="#12a8b5"/></svg></b><u></u></div>
                <div class="top-main">
                    <div class="row1">
                        <div class="quick">
                            <gjg-icon name="qDoc" size="18"></gjg-icon>
                            <gjg-icon name="qOpen" size="19" style="margin-left:10px"></gjg-icon>
                            <gjg-icon name="qSave" size="18" style="margin-left:11px"></gjg-icon>
                            <gjg-icon name="qUndo" size="19" style="margin-left:11px"></gjg-icon><div class="caret" style="margin:14px 0 0 2px"></div>
                            <gjg-icon name="qRedo" size="19" style="margin-left:10px"></gjg-icon><div class="caret" style="margin:14px 0 0 2px;border-top-color:#ccc"></div>
                            <gjg-icon name="qGlobe" size="20" style="margin-left:11px"></gjg-icon><div class="caret" style="margin:14px 0 0 10px"></div>
                        </div>
                        <div class="title">GJG2021 - [工程1]</div>
                        <div class="winbtns">
                            <svg width="12" height="12"><path d="M1 6h10" stroke="#666" stroke-width="2"/></svg>
                            <svg width="12" height="12"><path d="M3.500 .5h8v7M.5 3.500h8v8h-8z" fill="none" stroke="#666"/></svg>
                            <svg width="12" height="12"><path d="M1 1l10 10M11 1L1 11" stroke="#666" stroke-width="1.300"/></svg>
                        </div>
                    </div>
                    <div class="row2">
                        <div class="tab">开始</div><div class="tab">工程设置</div><div class="tab on">建模</div><div class="tab">表格算量</div><div class="tab" style="letter-spacing:.7px">CAD识别</div><div class="tab">协作</div><div class="tab">视图</div><div class="tab">工程量</div><div class="tab">工具</div>
                        <div class="acct">
                            <gjg-icon name="avatar"></gjg-icon>
                            <div style="margin-left:9px;font-size:16px">360256941@QQ.COM</div>
                            <div class="caret" style="margin:0 10px 0 7px"></div>
                            <gjg-icon name="headset" size="18"></gjg-icon>
                            <div style="margin-left:13px">钢构家园</div>
                            <div style="margin-left:15px">帮助</div>
                            <div class="caret" style="margin:0 9px 0 7px"></div>
                            <gjg-icon name="upload" size="17"></gjg-icon>
                        </div>
                    </div>
                </div>
            </div>

            <div class="ribbon">
                <div class="group" style="width:125px">
                    <div class="col">
                        <gjg-rb-item icon="select" caret>选择</gjg-rb-item>
                        <gjg-rb-item icon="batch" caret disabled>批量选择</gjg-rb-item>
                        <gjg-rb-item icon="find">图元查找</gjg-rb-item>
                    </div>
                    <div class="group-label">选择</div>
                </div>
                <div class="group" style="width:265px">
                    <div class="col" style="width:109px">
                        <gjg-rb-item icon="axis2" caret>两点辅轴</gjg-rb-item>
                        <gjg-rb-item icon="length" caret>长度标注</gjg-rb-item>
                        <gjg-rb-item icon="origin">设置原点</gjg-rb-item>
                    </div>
                    <div class="col">
                        <gjg-rb-item icon="floorcopy" caret>层间复制构件</gjg-rb-item>
                        <gjg-rb-item icon="elsave" caret>图元存盘</gjg-rb-item>
                        <gjg-rb-item icon="define">定义</gjg-rb-item>
                    </div>
                </div>
                <div class="group" style="width:82px;padding-left:10px">
                    <div class="col">
                        <div class="pair"><gjg-icon name="point"></gjg-icon><gjg-icon name="circlept"></gjg-icon></div>
                        <div class="pair"><gjg-icon name="gline"></gjg-icon><gjg-icon name="garc"></gjg-icon></div>
                        <div class="pair"><gjg-icon name="grect"></gjg-icon></div>
                    </div>
                </div>
                <div class="group" style="width:192px">
                    <div class="col" style="width:69px">
                        <div class="pair"><gjg-icon name="brush"></gjg-icon><gjg-icon name="rotate"></gjg-icon></div>
                        <div class="pair"><gjg-icon name="offset"></gjg-icon><gjg-icon name="mirror"></gjg-icon></div>
                        <div class="pair"><gjg-icon name="move"></gjg-icon><gjg-icon name="gmirror"></gjg-icon></div>
                    </div>
                    <div class="col">
                        <gjg-rb-item icon="align" caret disabled>平齐到面</gjg-rb-item>
                        <gjg-rb-item icon="cut" caret>零件切割</gjg-rb-item>
                        <gjg-rb-item icon="ring" caret>环形阵列</gjg-rb-item>
                    </div>
                </div>
                <div class="group" style="width:386px;padding-left:13px">
                    <div class="col" style="width:138px">
                        <gjg-rb-item icon="plate" caret>线式钢板</gjg-rb-item>
                        <gjg-rb-item icon="belong" caret>创建归属</gjg-rb-item>
                        <gjg-rb-item icon="combo" caret>创建组合构件</gjg-rb-item>
                    </div>
                    <div class="col" style="width:109px">
                        <gjg-rb-item icon="bolt" caret>布置螺栓</gjg-rb-item>
                        <gjg-rb-item icon="stud" caret>布置栓钉</gjg-rb-item>
                        <gjg-rb-item icon="anchor" caret>布置锚栓</gjg-rb-item>
                    </div>
                    <div class="col">
                        <gjg-rb-item icon="guide">创建辅助线</gjg-rb-item>
                        <gjg-rb-item icon="hole" caret>布置矩形孔</gjg-rb-item>
                        <gjg-rb-item icon="rib" disabled>布置加劲肋</gjg-rb-item>
                    </div>
                </div>
                <div class="group" style="width:348px">
                    <div class="col" style="width:154px">
                        <gjg-rb-item icon="node">创建节点</gjg-rb-item>
                        <gjg-rb-item icon="detail">创建细部</gjg-rb-item>
                        <gjg-rb-item icon="param" caret>创建参数化构件</gjg-rb-item>
                    </div>
                    <div class="col">
                        <gjg-rb-item icon="editnode">编辑节点细部/参数化</gjg-rb-item>
                        <gjg-rb-item icon="explode">炸开节点细部/自定义</gjg-rb-item>
                        <gjg-rb-item icon="customnode" caret>创建自定义节点</gjg-rb-item>
                    </div>
                </div>
                <div class="group" style="width:184px">
                    <div class="col">
                        <gjg-rb-item icon="plane" caret>创建水平工作平面</gjg-rb-item>
                        <gjg-rb-item icon="manage">管理</gjg-rb-item>
                        <gjg-rb-item icon="coord" disabled>修改坐标系方向</gjg-rb-item>
                    </div>
                </div>
                <div class="group" style="width:159px;padding:6px 0 0 8px;gap:2px">
                    <gjg-rb-big icon="portal" active>万能门架</gjg-rb-big>
                    <gjg-rb-big icon="smart" disabled>智能布置</gjg-rb-big>
                </div>
            </div>

            <div class="main">
                <div class="left">
                    <div class="combos">
                        <div class="combo" style="width:123px">基础层<div class="caret"></div></div>
                        <div class="combo" style="width:200px">主构件</div>
                    </div>
                    <div class="tree-head">
                        <gjg-icon name="sparkle" size="18"></gjg-icon>
                        <div style="width:152px;padding-left:10px;box-sizing:border-box">结构类型</div>
                        <div class="sq"><gjg-icon name="listbtn" size="22" box="28"></gjg-icon></div>
                        <div class="sq"><gjg-icon name="listbtn" size="22" box="28"></gjg-icon></div>
                    </div>
                    <div class="tree">
                        <gjg-tree-row icon="fopen">常用构件类型</gjg-tree-row>
                        <gjg-tree-row child icon="grid">轴网(J)</gjg-tree-row>
                        <gjg-tree-row icon="fclosed">轴线</gjg-tree-row>
                        <gjg-tree-row icon="fopen">主构件</gjg-tree-row>
                        <gjg-tree-row child active icon="column">钢柱(Z)</gjg-tree-row>
                        <gjg-tree-row child icon="beam">钢梁(L)</gjg-tree-row>
                        <gjg-tree-row icon="fopen">次构件</gjg-tree-row>
                        <gjg-tree-row child icon="tie">系杆(X)</gjg-tree-row>
                        <gjg-tree-row child icon="purlin">檩条(U)</gjg-tree-row>
                        <gjg-tree-row child icon="sbrace">隅撑(Y)</gjg-tree-row>
                        <gjg-tree-row child icon="rod">拉条(V)</gjg-tree-row>
                        <gjg-tree-row child icon="gutter">天沟(H)</gjg-tree-row>
                        <gjg-tree-row child icon="cross">支撑(A)</gjg-tree-row>
                        <gjg-tree-row child icon="rail">栏杆</gjg-tree-row>
                        <gjg-tree-row child icon="door">门框(C)</gjg-tree-row>
                        <gjg-tree-row child icon="win">窗框(C)</gjg-tree-row>
                        <gjg-tree-row child icon="strut">撑杆(V)</gjg-tree-row>
                        <gjg-tree-row icon="fopen">组合构件</gjg-tree-row>
                        <gjg-tree-row child icon="mega">巨型柱</gjg-tree-row>
                        <gjg-tree-row child icon="wall">钢板剪力墙</gjg-tree-row>
                        <gjg-tree-row child icon="platform">钢平台</gjg-tree-row>
                        <gjg-tree-row child icon="lift">电梯井</gjg-tree-row>
                        <gjg-tree-row child icon="stair">钢楼梯</gjg-tree-row>
                        <gjg-tree-row child icon="truss">转换桁架</gjg-tree-row>
                        <gjg-tree-row child icon="ladder">钢爬梯</gjg-tree-row>
                    </div>
                    <div class="tree-foot"></div>
                </div>
                <gjg-workspace></gjg-workspace>
            </div>

            <div class="status">
                <span style="width:328px;margin-left:3px;font-size:16px;letter-spacing:.3px">X = -2944.557 Y = 12431.505</span>
                <span style="width:104px">层高：3.000</span>
                <span style="width:129px">底标高：-3.050</span>
                <span style="width:128px">0</span>
                <span style="width:130px">隐藏：0</span>
                <div class="sb" style="width:30px"><gjg-icon name="sbL"></gjg-icon></div>
                <div class="sb on" style="width:44px;margin-left:4px"><gjg-icon name="sbPin"></gjg-icon><div class="caret"></div></div>
                <div class="sb on" style="width:45px;margin-left:5px"><gjg-icon name="sbCube"></gjg-icon><div class="caret"></div></div>
                <div class="sb" style="width:30px;margin-left:5px"><gjg-icon name="sbX"></gjg-icon></div>
                <div class="sb" style="width:42px;margin-left:3px"><gjg-icon name="sbRot"></gjg-icon><div class="caret"></div></div>
                <div class="sb" style="width:44px;margin-left:8px"><gjg-icon name="sbLine"></gjg-icon><div class="caret"></div></div>
                <div class="sb on" style="width:44px;margin-left:5px"><gjg-icon name="sbPlus"></gjg-icon><div class="caret"></div></div>
                <div class="sb" style="width:31px;margin-left:4px"><gjg-icon name="sbI"></gjg-icon></div>
                <div class="sb" style="width:30px;margin-left:4px"><gjg-icon name="sbDoor"></gjg-icon></div>
                <div class="sb" style="width:70px;margin-left:5px;color:#444">折线选择</div>
                <div class="sb on" style="width:112px;margin-left:11px;border-color:#bbb;justify-content:space-between;padding:0 6px 0 4px;color:#222">无工作平面<div class="caret"></div></div>
                <span style="margin-left:4px">按鼠标左键指定第一个角点，或拾取构件图元</span>
            </div>

            <gjg-dialog heading="布置门式刚架">
                <div class="dlg-grid">
                    <div class="tab-list">门架列表</div>
                    <div class="tools">
                        <gjg-tool icon="slope1">新建单坡</gjg-tool>
                        <gjg-tool icon="slope2">新建双坡</gjg-tool>
                        <gjg-tool icon="delspan" style="margin-left:1px">删除末跨</gjg-tool>
                        <gjg-tool>抗风柱</gjg-tool>
                        <div class="sep"></div>
                        <div class="check"><b><svg width="12" height="12"><path d="M2 6l3 3 5-6" fill="none" stroke="#fff" stroke-width="1.800"/></svg></b>显示操作说明</div>
                    </div>
                    <div class="list"><div>GJ-1</div></div>
                    <gjg-frame-canvas><gjg-steps></gjg-steps></gjg-frame-canvas>
                </div>
                <div class="foot">
                    <div class="note">说明：门架插入点在左侧柱外侧中点，跨度从插入点开始计算。<span class="unit">单位：mm</span></div>
                    <div class="btn ok">确定</div>
                    <div class="btn no">取消</div>
                </div>
            </gjg-dialog>

            <svg class="marks" width="1920" height="1007">
                <rect x="324" y="184.500" width="201" height="36" fill="none" stroke="#f5363c" stroke-width="3"/>
                <path d="M1636 87L490 174L488 170L473 178.500L490 183.500L490 182z" fill="#f5363c"/>
            </svg>`;
    }
}

// Register children first so nothing is left undefined when the app renders
customElements.define('gjg-icon', GjgIcon);
customElements.define('gjg-rb-item', GjgRibbonItem);
customElements.define('gjg-rb-big', GjgRibbonBig);
customElements.define('gjg-tree-row', GjgTreeRow);
customElements.define('gjg-tool', GjgTool);
customElements.define('gjg-dialog', GjgDialog);
customElements.define('gjg-frame-canvas', GjgFrameCanvas);
customElements.define('gjg-steps', GjgSteps);
customElements.define('gjg-workspace', GjgWorkspace);
customElements.define('gjg-app', GjgApp);
</script>
</body>
</html>
